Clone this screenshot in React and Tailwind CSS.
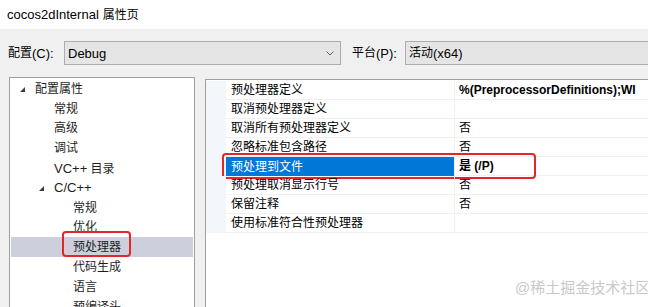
import React from "react";

const Tri = () => (
  <svg width="5" height="5" viewBox="0 0 5 5" className="shrink-0 mt-[2px]">
    <polygon points="5,0 5,5 0,5" fill="#3c3c3c" />
  </svg>
);

const tree = [
  { pl: "pl-[9px]", tri: true, t: <>配置属性</> },
  { pl: "pl-[43px]", t: <>常规</> },
  { pl: "pl-[43px]", t: <>高级</> },
  { pl: "pl-[43px]", t: <>调试</> },
  { pl: "pl-[43px]", t: <><span className="text-[13px]">VC++</span> 目录</> },
  { pl: "pl-[28px]", tri: true, t: <span className="text-[13px]">C/C++</span> },
  { pl: "pl-[62px]", t: <>常规</> },
  { pl: "pl-[62px]", t: <>优化</> },
  { pl: "pl-[62px]", t: <>预处理器</>, sel: true },
  { pl: "pl-[62px]", t: <>代码生成</> },
  { pl: "pl-[62px]", t: <>语言</> },
  { pl: "pl-[62px]", t: <>预编译头</> },
];

const rows = [
  { n: "预处理器定义", v: "%(PreprocessorDefinitions);WI", bold: true },
  { n: "取消预处理器定义", v: "" },
  { n: "取消所有预处理器定义", v: "否" },
  { n: "忽略标准包含路径", v: "否" },
  { n: "预处理到文件", v: "是 (/P)", bold: true, sel: true },
  { n: "预处理取消显示行号", v: "否" },
  { n: "保留注释", v: "否" },
  { n: "使用标准符合性预处理器", v: "" },
];

export default function App() {
  return (
    <div className="w-[648px] h-[307px] overflow-hidden relative bg-[#f0f0f0] font-['Liberation_Sans','Noto_Sans_CJK_SC',sans-serif] text-[12px] leading-none text-black">
      {/* Title bar */}
      <div className="h-[29px] bg-white flex items-center pl-[7px]">
        <span className="text-[13px]">cocos2dInternal</span>
        <span className="ml-[4px]">属性页</span>
      </div>

      {/* Config row */}
      <div className="flex items-center h-[24px] mt-[12px]">
        <div className="w-[64px] pl-[8px] flex items-center">
          配置<span className="text-[13px]">(C):</span>
        </div>
        <div className="w-[277px] h-full border border-[#adadad] bg-[#e5e5e5] flex items-center justify-between pl-[3px] pr-[6px]">
          <span className="text-[13px]">Debug</span>
          <svg width="8" height="5" viewBox="0 0 8 5">
            <polyline points="0.5,0.5 4,4 7.5,0.5" fill="none" stroke="#606060" strokeWidth="1" />
          </svg>
        </div>
        <div className="w-[53px] ml-[11px] flex items-center">
          平台<span className="text-[13px]">(P):</span>
        </div>
        <div className="flex-1 h-full border border-r-0 border-[#adadad] bg-[#e5e5e5] flex items-center pl-[3px]">
          活动<span className="text-[13px]">(x64)</span>
        </div>
      </div>

      {/* Panels */}
      <div className="flex items-start mt-[12px]">
        {/* Tree */}
        <div className="ml-[9px] w-[186px] h-[240px] border border-b-0 border-[#a0a0a0] bg-white pt-[1px] px-[1px] text-[#1e1e1e]">
          {tree.map((it, i) => (
            <div
              key={i}
              className={`relative h-[19.8px] flex items-center ${it.pl} ${it.sel ? "bg-[#cdd0dc]" : ""}`}
            >
              {it.tri && (
                <span className="w-[15px] flex items-center">
                  <Tri />
                </span>
              )}
              <span>{it.t}</span>
              {it.sel && (
                <div className="absolute left-[51px] top-[-6px] w-[69px] h-[26px] border-[2.5px] border-[#e3262a] rounded-[4px]" />
              )}
            </div>
          ))}
        </div>

        {/* Property grid */}
        <div className="ml-[10px] mt-[2px] flex-1 h-[240px] border border-r-0 border-b-0 border-[#a0a0a0] bg-white pt-[1px]">
          {rows.map((r, i) => (
            <div key={i} className="relative flex h-[19px]">
              <div className="w-[20px] bg-[#f3f6fa]" />
              <div
                className={`w-[229px] flex items-center pl-[5px] border-r border-[#f0f0f0] ${
                  r.sel ? "bg-[#0078d7] text-white" : "border-b"
                }`}
              >
                {r.n}
              </div>
              <div
                className={`w-[185px] overflow-hidden whitespace-nowrap flex items-center pl-[4px] border-b border-[#f0f0f0] ${
                  r.bold ? "font-bold" : ""
                }`}
              >
                {r.v}
              </div>
              <div className="flex-1 border-b border-[#f0f0f0]" />
              {r.sel && (
                <div className="absolute left-[16px] top-[-4px] w-[314px] h-[26px] border-[2.5px] border-[#e3262a] rounded-[4px]" />
              )}
            </div>
          ))}
        </div>
      </div>

      {/* Watermark */}
      <div className="absolute left-[515px] top-[279px] text-[15px] leading-[18px] text-[#c9c9c9] whitespace-nowrap">
        @稀土掘金技术社区
      </div>
    </div>
  );
}
